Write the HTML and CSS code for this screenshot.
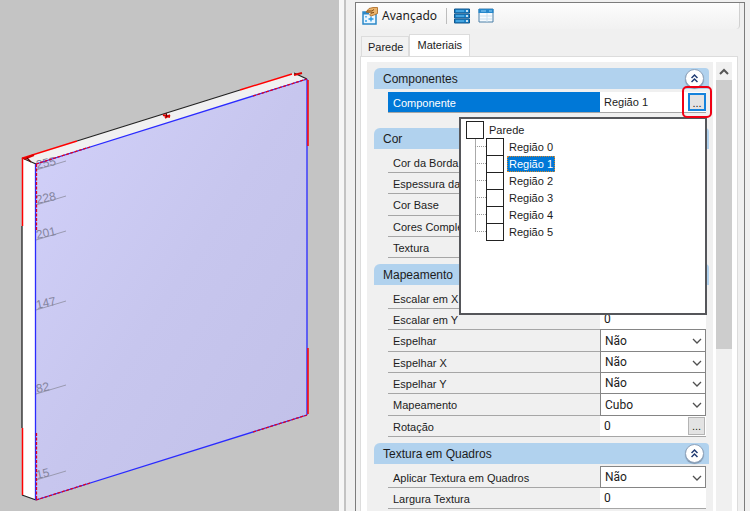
FILE: index.html
```html
<!DOCTYPE html>
<html lang="pt-BR">
<head>
<meta charset="utf-8">
<meta name="viewport" content="width=device-width, initial-scale=1">
<title>Avançado</title>
<link rel="stylesheet" href="styles.css">
</head>
<body>
<svg class="defs" aria-hidden="true">
  <symbol id="collapse" viewBox="0 0 20 20">
    <path d="M6.500 9.500 10 6l3.500 3.500M6.500 14 10 10.500l3.500 3.500" fill="none" stroke="#1f3a72" stroke-width="1.700"/>
  </symbol>
  <symbol id="chevron" viewBox="0 0 10 6">
    <path d="M1 1l4 4 4-4" fill="none" stroke="#505050" stroke-width="1.300"/>
  </symbol>
</svg>

<main class="app">
  <section class="scene">
    <svg viewBox="0 0 339 511" preserveAspectRatio="xMinYMin slice" role="img" aria-label="Parede">
      <defs>
        <linearGradient id="face" x1="0" y1="0" x2="1" y2="1">
          <stop offset="0" stop-color="#d2d1fa"/>
          <stop offset=".5" stop-color="#c7c6ee"/>
          <stop offset="1" stop-color="#c1c0e8"/>
        </linearGradient>
      </defs>
      <path d="M22 158 294 73 307 79 36 164z" fill="#f1f1f1"/>
      <path d="M22 158 36 164V500L22 495z" fill="#fff"/>
      <path d="M36 164 307 79V415L36 500z" fill="url(#face)"/>
      <g class="marks">
        <path d="M36 170 66 161M36 205 66 196M36 240 66 231M36 310 66 301M36 394 66 385M36 480 66 471"/>
        <text transform="translate(37 169) rotate(-12)">255</text>
        <text transform="translate(37 204) rotate(-12)">228</text>
        <text transform="translate(37 239) rotate(-12)">201</text>
        <text transform="translate(37 309) rotate(-12)">147</text>
        <text transform="translate(37 393) rotate(-12)">82</text>
        <text transform="translate(37 479) rotate(-12)">15</text>
      </g>
      <g fill="none">
        <path d="M22 226V428M22 495 36 500M77 141 240 90M22 158 36 164M294 73 307 79" stroke="#222" stroke-width="1.300"/>
        <path d="M36 164 307 79M36 500 307 415M35.500 164V500M307 79V415" stroke="#2a2aff" stroke-width="1.300"/>
        <path d="M22.500 226V158L77 141M22.500 428V495M240 90 292 74M308 80V146M308 348V414" stroke="#f00" stroke-width="1.500"/>
        <path d="M24 159 34 155M294 75 302 73M163 115 170 117M165 118 170 115" stroke="#d00" stroke-width="2"/>
        <path d="M36.500 164V231M36.500 433V500M36 164 90 147M253 96 307 79M36 500 90 483M253 432 307 415" stroke="#e00020" stroke-width="1.300" stroke-dasharray="3 1.500"/>
        <path d="M27 158 31 162M166 113 167 117" stroke="#600" stroke-width="1.300"/>
      </g>
    </svg>
  </section>

  <aside class="dock">
    <div class="panel">
      <header class="toolbar">
        <button class="tool tool-text" type="button">
          <svg width="16" height="18" viewBox="0 0 16 18" aria-hidden="true">
            <path d="M1 5h13v12H1z" fill="#eaf6ff" stroke="#2b88c8" stroke-width="1.500"/>
            <path d="M1 5h6v2.500H1z" fill="#2b88c8"/>
            <path d="M4 9v1.500M4 13v2M9 9.500v5M6.500 12h5" stroke="#2196e3" stroke-width="1.300"/>
            <path d="M4 5 7 1.500 11 .500h4.500v6L12 8 9 9 7.500 8 9.500 6z" fill="#e9b36c" stroke="#a8651c" stroke-width=".800"/>
            <path d="M5 4h5l2-1.500M9 6 12 5.500" fill="none" stroke="#7d4710"/>
          </svg>
          <span>Avançado</span>
        </button>
        <span class="divider"></span>
        <button class="tool" type="button" aria-label="Lista">
          <svg width="16" height="16" viewBox="0 0 16 16" aria-hidden="true">
            <path d="M.500 1h15v4H.500zM.500 6h15v4H.500zM.500 11h15v4H.500z" fill="#1d86cc" stroke="#14578c"/>
            <path d="M2 3h8M2 8h8M2 13h8" stroke="#6cc3f5"/>
            <path d="M12 3h2M12 8h2M12 13h2" stroke="#fff" stroke-width="1.500"/>
          </svg>
        </button>
        <button class="tool" type="button" aria-label="Tabela">
          <svg width="16" height="16" viewBox="0 0 16 16" aria-hidden="true">
            <path d="M1 1h14v13H1z" fill="#f6fbff" stroke="#4a7fa6"/>
            <path d="M.500 1h15v4H.500z" fill="#2588cc"/>
            <path d="M3 3h5M11 3h3" stroke="#8fd0fa"/>
            <path d="M9 5v9M2 8h12M2 11h12" stroke="#c9dfee"/>
          </svg>
        </button>
      </header>

      <nav class="tabs" role="tablist">
        <button class="tab" type="button" role="tab" aria-selected="false">Parede</button>
        <button class="tab active" type="button" role="tab" aria-selected="true">Materiais</button>
      </nav>

      <div class="page">
        <div class="props">
          <section class="group spaced">
            <h2>Componentes <button class="collapse" type="button" aria-label="Recolher"><svg><use href="#collapse"/></svg></button></h2>
            <div class="rows">
              <div class="row selected">
                <label for="componente">Componente</label>
                <div class="value">
                  <input id="componente" class="named" value="Região 1">
                  <span class="highlight"><button class="more focus" type="button">...</button></span>
                </div>
                <ul class="popup">
                  <li><label><input type="checkbox"><span>Parede</span></label>
                    <ul>
                      <li><label><input type="checkbox"><span>Região 0</span></label></li>
                      <li><label><input type="checkbox"><span class="picked">Região 1</span></label></li>
                      <li><label><input type="checkbox"><span>Região 2</span></label></li>
                      <li><label><input type="checkbox"><span>Região 3</span></label></li>
                      <li><label><input type="checkbox"><span>Região 4</span></label></li>
                      <li><label><input type="checkbox"><span>Região 5</span></label></li>
                    </ul>
                  </li>
                </ul>
              </div>
            </div>
          </section>

          <section class="group">
            <h2>Cor</h2>
            <div class="rows">
              <div class="row"><span class="name">Cor da Borda</span></div>
              <div class="row"><span class="name">Espessura da</span></div>
              <div class="row"><span class="name">Cor Base</span></div>
              <div class="row"><span class="name">Cores Comple</span></div>
              <div class="row"><span class="name">Textura</span></div>
            </div>
          </section>

          <section class="group">
            <h2>Mapeamento</h2>
            <div class="rows">
              <div class="row"><span class="name">Escalar em X</span></div>
              <div class="row"><label for="ey">Escalar em Y</label><div class="value"><input id="ey" value="0"></div></div>
              <div class="row"><label for="esp">Espelhar</label><div class="value choice"><select id="esp"><option>Não</option></select><svg><use href="#chevron"/></svg></div></div>
              <div class="row"><label for="espx">Espelhar X</label><div class="value choice"><select id="espx"><option>Não</option></select><svg><use href="#chevron"/></svg></div></div>
              <div class="row"><label for="espy">Espelhar Y</label><div class="value choice"><select id="espy"><option>Não</option></select><svg><use href="#chevron"/></svg></div></div>
              <div class="row"><label for="map">Mapeamento</label><div class="value choice"><select id="map"><option>Cubo</option></select><svg><use href="#chevron"/></svg></div></div>
              <div class="row"><label for="rot">Rotação</label><div class="value"><input id="rot" value="0"><button class="more" type="button">...</button></div></div>
            </div>
          </section>

          <section class="group">
            <h2>Textura em Quadros <button class="collapse" type="button" aria-label="Recolher"><svg><use href="#collapse"/></svg></button></h2>
            <div class="rows">
              <div class="row"><label for="apl">Aplicar Textura em Quadros</label><div class="value choice"><select id="apl"><option>Não</option></select><svg><use href="#chevron"/></svg></div></div>
              <div class="row"><label for="larg">Largura Textura</label><div class="value"><input id="larg" value="0"></div></div>
            </div>
          </section>
        </div>

        <div class="scrollbar">
          <button class="up" type="button" aria-label="Rolar para cima">
            <svg width="10" height="7" viewBox="0 0 10 7" aria-hidden="true"><path d="M1 6l4-4 4 4" fill="none" stroke="#555" stroke-width="2"/></svg>
          </button>
          <div class="thumb"></div>
        </div>
      </div>
    </div>
  </aside>
</main>
</body>
</html>
```

FILE: styles.css
```css
* { box-sizing: border-box; }

body {
  margin: 0;
  background: #f0f0f0;
  color: #1c1c1c;
  font: 11px/16px "Liberation Sans", Arial, sans-serif;
}

button, input, select { font: inherit; color: inherit; margin: 0; padding: 0; }
ul { list-style: none; margin: 0; padding: 0; }
.defs { position: absolute; width: 0; height: 0; }

.app {
  display: grid;
  grid-template-columns: minmax(0, 339fr) minmax(0, 411fr);
  grid-template-rows: minmax(0, 1fr);
  height: 100vh;
  overflow: hidden;
}

/* 3D view */
.scene { background: #c4c4c4; overflow: hidden; }
.scene svg { display: block; width: 100%; height: 100%; }
.marks { font-size: 12px; fill: #85859f; }
.marks path { fill: none; stroke: #9a9ab0; }

/* Property panel */
.dock {
  display: flex;
  min-height: 0;
  padding: 2px 5px 0 5px;
  border-left: 1px solid #f8f8f8;
  background: linear-gradient(90deg, #f6f6f6 4px, #c3c3c3 4px, #c3c3c3 6px, #f0f0f0 6px);
}
.panel {
  flex: 1;
  min-width: 0;
  display: flex;
  flex-direction: column;
  margin-left: 10px;
  border: 1px solid #7c7c7c;
  border-bottom: 0;
  background: #f0f0f0;
}

.toolbar {
  flex-shrink: 0;
  display: flex;
  align-items: center;
  height: 26px;
  margin-right: 4px;
  padding-left: 6px;
  border-right: 1px solid #d0d0d0;
  border-radius: 0 0 4px 0;
  background: linear-gradient(#fdfdfd, #f1f1f1);
}
.tool { display: flex; align-items: center; margin-right: 8px; border: 0; background: none; }
.tool-text { gap: 4px; font: 12px/16px "Noto Sans", "Open Sans", sans-serif; }
.divider { width: 1px; height: 16px; margin: 0 7px 0 1px; background: #bdbdbd; }

.tabs { flex-shrink: 0; display: flex; align-items: flex-end; height: 27px; padding-left: 5px; }
.tab {
  height: 20px;
  padding: 0 5px 0 6px;
  border: 1px solid #dcdcdc;
  border-bottom: 0;
  background: #f2f2f2;
}
.tab.active { height: 23px; margin-bottom: -1px; padding: 0 7px 2px; background: #fff; }

.page {
  flex: 1;
  display: flex;
  margin: 0 6px 0 4px;
  padding: 5px 5px 0 6px;
  border: 1px solid #dcdcdc;
  border-bottom: 0;
  background: #fff;
  min-height: 0;
}
.props { flex: 1; min-width: 0; padding: 6px 4px 0 7px; background: #f0f0f0; }

.group { margin-bottom: 6px; }
.group.spaced { margin-bottom: 15px; }
.group h2 {
  display: flex;
  align-items: center;
  justify-content: space-between;
  height: 21px;
  margin: 0 0 3px;
  padding: 0 5px 0 9px;
  border-radius: 6px 4px 0 0;
  background: #b1d2ee;
  font: 12px/20px "Liberation Sans", Arial, sans-serif;
}
.collapse {
  display: flex;
  width: 19px;
  height: 19px;
  border: 1px solid #90a4bc;
  border-radius: 50%;
  background: #fff;
  box-shadow: 0 1px 1px #7d94ac;
}
.collapse svg { width: 17px; height: 17px; }

.rows { display: grid; grid-auto-rows: 21px 21px 22px; margin: 0 3px 0 14px; }
.row {
  position: relative;
  display: grid;
  grid-template-columns: minmax(0, 2fr) minmax(0, 1fr);
  border-bottom: 1px solid #a6a6a6;
}
.row > label, .name { padding: 3px 0 0 5px; white-space: nowrap; }
.selected > label { background: #0078d7; color: #fff; }

.value { display: flex; min-width: 0; background: #fff; }
.value input { flex: 1; min-width: 0; padding: 0 4px; border: 0; background: none; font: 12px/16px Roboto, sans-serif; }
.value .named { font: 11px/16px "Liberation Sans", Arial, sans-serif; }
.choice { position: relative; margin: -1px 0; border: 1px solid #858585; }
.choice select {
  width: 100%;
  padding: 0 4px;
  border: 0;
  background: #fff;
  appearance: none;
  font: 12px/16px Roboto, sans-serif;
}
.choice svg { position: absolute; right: 3px; top: 8px; width: 10px; height: 6px; pointer-events: none; }

.more { width: 17px; height: 18px; margin: 1px 1px 0 0; border: 1px solid #b4b4b4; background: #e3e3e3; }
.more.focus { width: 18px; border: 2px solid #1583dc; margin: 0; }
.highlight {
  position: relative;
  z-index: 2;
  display: flex;
  align-items: center;
  justify-content: center;
  width: 30px;
  height: 32px;
  margin: -6px -6px -6px 0;
  border: 2px solid #f00014;
  border-radius: 5px;
}

/* Component tree drop-down */
.popup {
  position: absolute;
  z-index: 1;
  top: 25px;
  right: -1px;
  width: 248px;
  height: 198px;
  padding: 2px 5px;
  border: 2px solid #55565a;
  background: #fff;
}
.popup label { display: flex; align-items: center; height: 17px; gap: 3px; }
.popup input {
  appearance: none;
  width: 18px;
  height: 18px;
  border: 1px solid #222;
  background: #fff;
}
.popup label span { height: 16px; padding: 0 2px; line-height: 16px; }
.popup .picked { background: #0078d7; color: #fff; outline: 1px dotted #d78728; outline-offset: -1px; }
.popup ul { margin-left: 9px; background: linear-gradient(#aaa, #aaa) 0 0 / 1px 94px no-repeat; }
.popup ul li { display: flex; align-items: center; }
.popup ul li::before { content: ""; width: 11px; border-top: 1px dotted #999; }

.scrollbar { display: flex; flex-direction: column; width: 16px; margin-left: 3px; background: #f0f0f0; }
.up { display: flex; justify-content: center; align-items: center; height: 18px; border: 0; background: #f0f0f0; }
.thumb { height: 60%; background: #cdcdcd; }
```
